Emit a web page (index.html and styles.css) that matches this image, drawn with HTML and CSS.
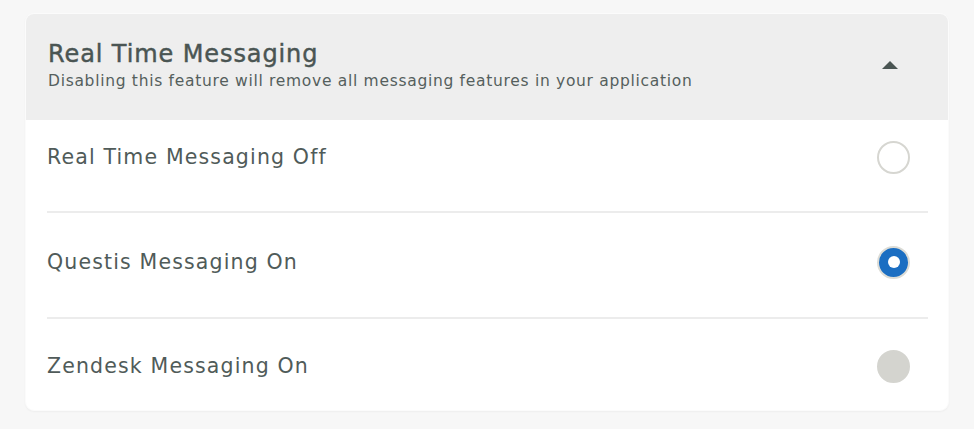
FILE: index.html
```html
<!DOCTYPE html>
<html lang="en">
<head>
<meta charset="utf-8">
<title>Real Time Messaging</title>
<link rel="stylesheet" href="styles.css">
</head>
<body>
<div class="page">
  <section class="card">
    <header class="card-header">
      <div class="header-text">
        <h2 class="title">Real Time Messaging</h2>
        <p class="subtitle">Disabling this feature will remove all messaging features in your application</p>
      </div>
      <span class="caret" aria-hidden="true"></span>
    </header>
    <div class="options">
      <label class="option option-first">
        <span class="option-label">Real Time Messaging Off</span>
        <span class="radio"></span>
      </label>
      <label class="option option-mid">
        <span class="option-label">Questis Messaging On</span>
        <span class="radio radio-checked"></span>
      </label>
      <label class="option option-last">
        <span class="option-label">Zendesk Messaging On</span>
        <span class="radio radio-disabled"></span>
      </label>
    </div>
  </section>
</div>
</body>
</html>
```
FILE: styles.css
```css
* { box-sizing: border-box; }
html, body {
  margin: 0;
  padding: 0;
  background: #f7f7f7;
  font-family: "DejaVu Sans", "Open Sans", sans-serif;
  color: #4d5856;
}
.page {
  padding: 13px 25px 20px 25px;
}
.card {
  background: #ffffff;
  border: 1px solid #fbfbfb;
  border-radius: 9px;
  overflow: hidden;
  box-shadow: 0 1px 2px rgba(0,0,0,0.04);
}
.card-header {
  background: #eeeeee;
  height: 106px;
  display: flex;
  align-items: flex-start;
  padding: 24px 40px 0 22px;
}
.header-text { flex: 1; }
.title {
  margin: 0;
  font-size: 24px;
  line-height: 32px;
  font-weight: 400;
  letter-spacing: 0.9px;
  -webkit-text-stroke: 0.45px #4a5553;
  color: #4a5553;
}
.subtitle {
  margin: 0;
  font-size: 15.5px;
  line-height: 22px;
  letter-spacing: 0.7px;
  color: #555f5d;
}
.caret {
  width: 0;
  height: 0;
  border-left: 8px solid transparent;
  border-right: 8px solid transparent;
  border-bottom: 8px solid #4a5553;
  margin-top: 23px;
  margin-right: 10px;
}
.options {
  padding: 0 20px 0 21px;
}
.option {
  display: flex;
  align-items: center;
  justify-content: space-between;
  height: 26px;
  box-sizing: content-box;
}
.option-first { padding: 24px 0 41px; border-bottom: 2px solid #ececec; }
.option-mid { padding: 36px 0 42px; border-bottom: 2px solid #ececec; }
.option-last { padding: 34px 0 31px; }
.option-label {
  font-size: 20.5px;
  letter-spacing: 1.15px;
  color: #505b59;
}
.radio {
  width: 33px;
  height: 33px;
  border-radius: 50%;
  border: 2px solid #d6d6d1;
  background: #ffffff;
  margin-right: 18px;
  display: flex;
  align-items: center;
  justify-content: center;
}
.radio-checked {
  background: #1b6ec2;
  border: 2px solid #dcdcd6;
}
.radio-checked::after {
  content: "";
  width: 12px;
  height: 12px;
  border-radius: 50%;
  background: #ffffff;
}
.radio-disabled {
  background: #d4d4cf;
  border-color: #d4d4cf;
}
```
